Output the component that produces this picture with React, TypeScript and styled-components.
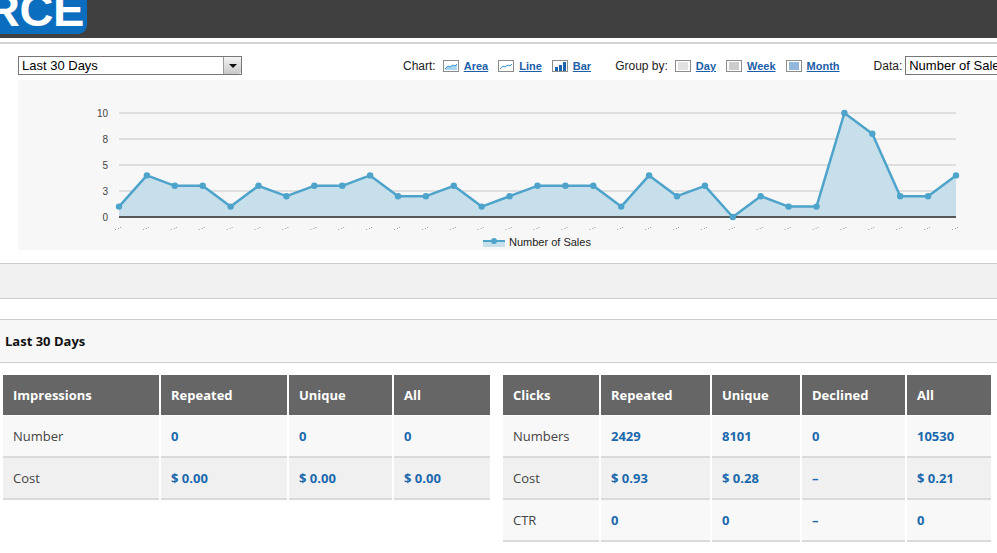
import styled, { createGlobalStyle } from 'styled-components';
import { ReactElement, Fragment } from 'react';

const GlobalStyle = createGlobalStyle`
  html, body {
    margin: 0;
    overflow: hidden;
    background: #fff;
  }
`;

const Page = styled.div`
  width: 1100px;
  font-family: 'Liberation Sans', Arial, sans-serif;
`;

const Header = styled.header`
  height: 38px;
  background: #404040;
  display: flex;
`;

const Logo = styled.div`
  width: 87px;
  height: 34px;
  background: #0b6dbd;
  border-bottom-right-radius: 9px;
  overflow: hidden;
`;

const LogoText = styled.span`
  display: block;
  font: bold 47px/47px 'Liberation Sans', Arial, sans-serif;
  color: #fff;
  margin: -14px 0 0 -14px;
  letter-spacing: -0.5px;
  white-space: nowrap;
`;

const Divider = styled.div`
  margin-top: 4px;
  border-top: 2px solid #d4d4d4;
`;

const Toolbar = styled.div`
  display: flex;
  align-items: center;
  height: 19px;
  margin: 12px 0 5px 18px;
  font-size: 12px;
  color: #222;
  white-space: nowrap;
  & > * {
    flex-shrink: 0;
  }
`;

const Select = styled.div<{ $width: number }>`
  width: ${({ $width }) => $width}px;
  flex-shrink: 0;
  height: 19px;
  box-sizing: border-box;
  border: 1px solid #777;
  display: flex;
  align-items: center;
  font-size: 13px;
  color: #000;
  background: #fff;
  overflow: hidden;
  white-space: nowrap;
`;

const SelectText = styled.span`
  flex: 1;
  padding-left: 3px;
`;

const SelectArrow = styled.span`
  width: 17px;
  height: 17px;
  border-left: 1px solid #999;
  border-radius: 0 3px 3px 0;
  background: linear-gradient(#f4f4f4, #c8c8c8);
  display: flex;
  align-items: center;
  justify-content: center;
  &::after {
    content: '';
    border-left: 4px solid transparent;
    border-right: 4px solid transparent;
    border-top: 4px solid #111;
  }
`;

const Group = styled.div<{ $offset: number }>`
  display: flex;
  align-items: center;
  margin-left: ${({ $offset }) => $offset}px;
`;

const GroupLabel = styled.span<{ $gap?: number }>`
  margin-right: ${({ $gap }) => $gap ?? 7}px;
`;

const ToolLink = styled.a`
  display: flex;
  align-items: center;
  gap: 5px;
  margin-right: 10px;
  font-size: 11px;
  font-weight: bold;
  color: #1c5ea8;
  text-decoration: underline;
  cursor: pointer;
  &:last-child {
    margin-right: 0;
  }
`;

const ChartPanel = styled.div`
  margin-left: 18px;
  height: 170px;
  background: #f7f7f7;
`;

const Band = styled.div`
  margin-top: 13px;
  height: 34px;
  background: #f0f0f0;
  border-top: 1px solid #ccc;
  border-bottom: 1px solid #ccc;
`;

const Section = styled.div`
  margin-top: 20px;
  height: 42px;
  background: #f7f7f7;
  border-top: 1px solid #ccc;
  border-bottom: 1px solid #ccc;
  display: flex;
  align-items: center;
  padding-left: 5px;
`;

const SectionTitle = styled.h2`
  margin: 0;
  font: bold 13px 'Open Sans', sans-serif;
  color: #111;
`;

const Tables = styled.div`
  display: flex;
  align-items: flex-start;
  gap: 13px;
  margin: 12px 0 0 3px;
`;

const Grid = styled.div<{ $cols: string }>`
  display: grid;
  grid-template-columns: ${({ $cols }) => $cols};
  column-gap: 2px;
  font-family: 'Open Sans', sans-serif;
  font-size: 13px;
`;

const HeadCell = styled.div`
  height: 40px;
  margin-bottom: 1px;
  padding: 0 10px;
  display: flex;
  align-items: center;
  background: #666;
  color: #fff;
  font-weight: bold;
`;

const Cell = styled.div<{ $shade: boolean; $value: boolean }>`
  height: 42px;
  box-sizing: border-box;
  padding: 0 10px;
  display: flex;
  align-items: center;
  background: ${({ $shade }) => ($shade ? '#f0f0f0' : '#f8f8f8')};
  border-bottom: 2px solid #dadada;
  color: ${({ $value }) => ($value ? '#1b69ad' : '#444')};
  font-weight: ${({ $value }) => ($value ? 'bold' : 'normal')};
`;

type IconKind = 'area' | 'line' | 'bar' | 'day' | 'week' | 'month';

function ToolIcon({ kind }: { kind: IconKind }): ReactElement {
  const lines = (color: string) =>
    [3, 5, 7, 9].map((y) => (
      <line key={y} x1="3" x2="13" y1={y} y2={y} stroke={color} strokeWidth="1" />
    ));
  return (
    <svg width="16" height="12" viewBox="0 0 16 12">
      <rect x="0.5" y="0.5" width="15" height="11" fill="#fff" stroke="#8c8c8c" />
      {kind === 'area' && (
        <>
          <path d="M2 9 L5 6 L7 7 L10 5 L12 6 L14 4 L14 10 L2 10 Z" fill="#a9d6f2" />
          <path d="M2 9 L5 6 L7 7 L10 5 L12 6 L14 4" fill="none" stroke="#3d8fd0" />
        </>
      )}
      {kind === 'line' && (
        <path d="M2 9 L5 6 L7 7 L10 5 L12 6 L14 4" fill="none" stroke="#3d8fd0" />
      )}
      {kind === 'bar' && (
        <>
          <rect x="3" y="7" width="3" height="4" fill="#1e63ae" />
          <rect x="7" y="5" width="3" height="6" fill="#1e63ae" />
          <rect x="11" y="2" width="3" height="9" fill="#1e63ae" />
        </>
      )}
      {kind === 'day' && lines('#c4c4c4')}
      {kind === 'week' && lines('#9a9a9a')}
      {kind === 'month' && lines('#2a6fb8')}
    </svg>
  );
}

const sales = [1, 4, 3, 3, 1, 3, 2, 3, 3, 4, 2, 2, 3, 1, 2, 3, 3, 3, 1, 4, 2, 3, 0, 2, 1, 1, 10, 8, 2, 2, 4];
const ticks = [
  { label: '10', y: 33 },
  { label: '8', y: 59 },
  { label: '5', y: 85 },
  { label: '3', y: 111 },
  { label: '0', y: 137 },
];

function SalesChart(): ReactElement {
  const left = 101;
  const right = 938;
  const step = (right - left) / (sales.length - 1);
  const pts = sales.map((v, i) => [left + i * step, 137 - v * 10.4]);
  const line = pts.map(([x, y]) => `${x.toFixed(1)},${y.toFixed(1)}`).join(' ');
  const area = `M${left},137 L${line.replace(/ /g, ' L')} L${right},137 Z`;
  return (
    <svg width="979" height="170" viewBox="0 0 979 170">
      {ticks.map((t) => (
        <g key={t.label}>
          <line x1={left} x2={right} y1={t.y} y2={t.y} stroke="#c6c6c6" strokeWidth="1" />
          <text
            x="90"
            y={t.y + 4}
            textAnchor="end"
            fontSize="10"
            fontFamily="'Liberation Sans', Arial, sans-serif"
            fill="#444"
          >
            {t.label}
          </text>
        </g>
      ))}
      <path d={area} fill="#c6dfeb" />
      <line x1={left} x2={right} y1="137" y2="137" stroke="#2b2b2b" strokeWidth="1.5" />
      <polyline points={line} fill="none" stroke="#4ea3cb" strokeWidth="2.5" strokeLinejoin="round" />
      {pts.map(([x, y], i) => (
        <circle key={i} cx={x} cy={y} r="3.2" fill="#4ea3cb" />
      ))}
      {pts.map(([x], i) => (
        <g key={`t${i}`} fill="#a0a0a0">
          <rect x={x - 4} y="149" width="1" height="1" />
          <rect x={x - 1} y="148" width="1" height="1" />
          <rect x={x + 1} y="147" width="1" height="1" />
        </g>
      ))}
      <rect x="465" y="162" width="22" height="5" fill="#c6dfeb" />
      <line x1="465" x2="487" y1="161" y2="161" stroke="#4ea3cb" strokeWidth="2" />
      <circle cx="476" cy="161" r="3" fill="#4ea3cb" />
      <text x="491" y="166" fontSize="11" fontFamily="'Liberation Sans', Arial, sans-serif" fill="#222">
        Number of Sales
      </text>
    </svg>
  );
}

type Row = { label: string; values: string[] };

function StatsTable({
  title,
  columns,
  widths,
  rows,
}: {
  title: string;
  columns: string[];
  widths: string;
  rows: Row[];
}): ReactElement {
  return (
    <Grid $cols={widths}>
      <HeadCell>{title}</HeadCell>
      {columns.map((c) => (
        <HeadCell key={c}>{c}</HeadCell>
      ))}
      {rows.map((r, i) => (
        <Fragment key={r.label}>
          <Cell $shade={i % 2 === 1} $value={false}>
            {r.label}
          </Cell>
          {r.values.map((v, j) => (
            <Cell key={j} $shade={i % 2 === 1} $value>
              {v}
            </Cell>
          ))}
        </Fragment>
      ))}
    </Grid>
  );
}

export default function App(): ReactElement {
  return (
    <Page>
      <GlobalStyle />
      <Header>
        <Logo>
          <LogoText>RCE</LogoText>
        </Logo>
      </Header>
      <Divider />
      <Toolbar>
        <Select $width={224}>
          <SelectText>Last 30 Days</SelectText>
          <SelectArrow />
        </Select>
        <Group $offset={161}>
          <GroupLabel>Chart:</GroupLabel>
          <ToolLink>
            <ToolIcon kind="area" />
            Area
          </ToolLink>
          <ToolLink>
            <ToolIcon kind="line" />
            Line
          </ToolLink>
          <ToolLink>
            <ToolIcon kind="bar" />
            Bar
          </ToolLink>
        </Group>
        <Group $offset={24}>
          <GroupLabel>Group by:</GroupLabel>
          <ToolLink>
            <ToolIcon kind="day" />
            Day
          </ToolLink>
          <ToolLink>
            <ToolIcon kind="week" />
            Week
          </ToolLink>
          <ToolLink>
            <ToolIcon kind="month" />
            Month
          </ToolLink>
        </Group>
        <Group $offset={34}>
          <GroupLabel $gap={3}>Data:</GroupLabel>
          <Select $width={150}>
            <SelectText>Number of Sales</SelectText>
          </Select>
        </Group>
      </Toolbar>
      <ChartPanel>
        <SalesChart />
      </ChartPanel>
      <Band />
      <Section>
        <SectionTitle>Last 30 Days</SectionTitle>
      </Section>
      <Tables>
        <StatsTable
          title="Impressions"
          columns={['Repeated', 'Unique', 'All']}
          widths="156px 126px 103px 96px"
          rows={[
            { label: 'Number', values: ['0', '0', '0'] },
            { label: 'Cost', values: ['$ 0.00', '$ 0.00', '$ 0.00'] },
          ]}
        />
        <StatsTable
          title="Clicks"
          columns={['Repeated', 'Unique', 'Declined', 'All']}
          widths="96px 109px 88px 103px 84px"
          rows={[
            { label: 'Numbers', values: ['2429', '8101', '0', '10530'] },
            { label: 'Cost', values: ['$ 0.93', '$ 0.28', '–', '$ 0.21'] },
            { label: 'CTR', values: ['0', '0', '–', '0'] },
          ]}
        />
      </Tables>
    </Page>
  );
}
